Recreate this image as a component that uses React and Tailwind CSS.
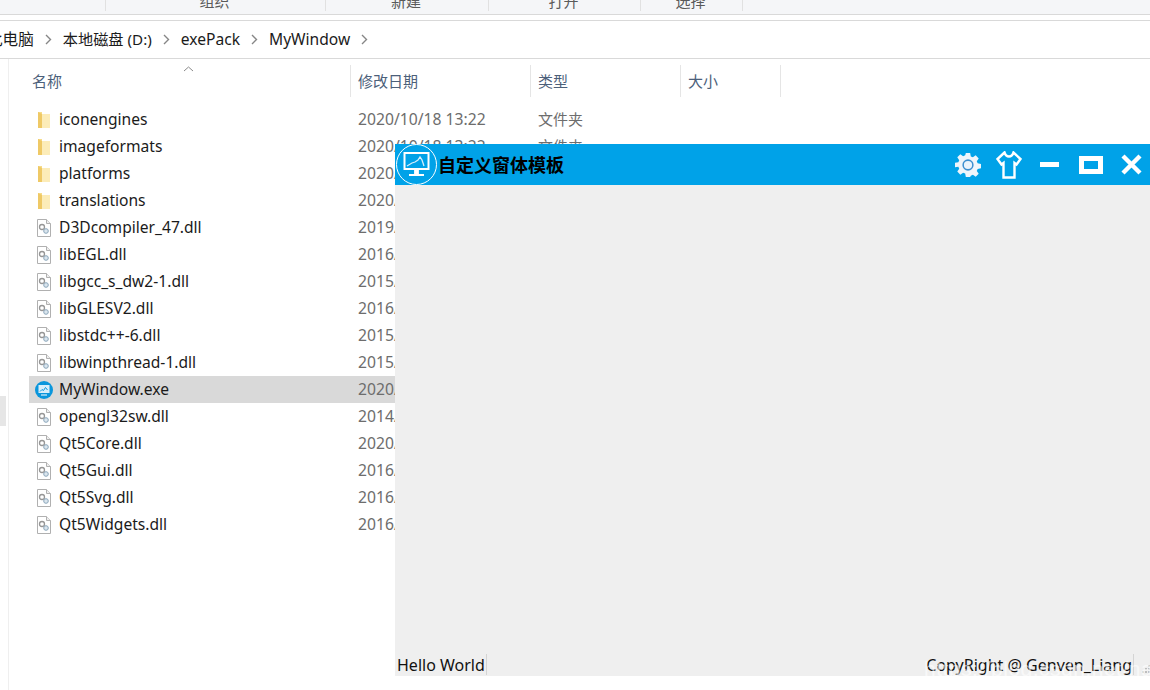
import React from "react";

const uiFont = { fontFamily: '"Noto Sans", "Noto Sans CJK SC", sans-serif' };

const files = [
  { name: "iconengines", date: "2020/10/18 13:22", type: "文件夹", kind: "folder" },
  { name: "imageformats", date: "2020/10/18 13:22", type: "文件夹", kind: "folder" },
  { name: "platforms", date: "2020/10/18 13:22", type: "文件夹", kind: "folder" },
  { name: "translations", date: "2020/10/18 13:22", type: "文件夹", kind: "folder" },
  { name: "D3Dcompiler_47.dll", date: "2019/1/1 12:00", kind: "dll" },
  { name: "libEGL.dll", date: "2016/1/1 12:00", kind: "dll" },
  { name: "libgcc_s_dw2-1.dll", date: "2015/1/1 12:00", kind: "dll" },
  { name: "libGLESV2.dll", date: "2016/1/1 12:00", kind: "dll" },
  { name: "libstdc++-6.dll", date: "2015/1/1 12:00", kind: "dll" },
  { name: "libwinpthread-1.dll", date: "2015/1/1 12:00", kind: "dll" },
  { name: "MyWindow.exe", date: "2020/10/18 13:22", kind: "exe", selected: true },
  { name: "opengl32sw.dll", date: "2014/1/1 12:00", kind: "dll" },
  { name: "Qt5Core.dll", date: "2020/1/1 12:00", kind: "dll" },
  { name: "Qt5Gui.dll", date: "2016/1/1 12:00", kind: "dll" },
  { name: "Qt5Svg.dll", date: "2016/1/1 12:00", kind: "dll" },
  { name: "Qt5Widgets.dll", date: "2016/1/1 12:00", kind: "dll" },
];

const FolderIcon = () => (
  <svg width="16" height="18" viewBox="0 0 16 18">
    <path d="M2 1h4v16H2z" fill="#f6dc8c" />
    <path d="M6 3h8v14H6z" fill="#fcecb8" />
    <path d="M2 1l4 2v14H2z" fill="#efc966" />
  </svg>
);

const DllIcon = () => (
  <svg width="16" height="18" viewBox="0 0 16 18">
    <path d="M1.500.5h9l4 4v13h-13z" fill="#fff" stroke="#b0b0b0" />
    <path d="M10.500.5v4h4" fill="#eee" stroke="#b0b0b0" />
    <circle cx="6" cy="8" r="2.500" fill="none" stroke="#969696" strokeWidth="1.300" />
    <circle cx="10" cy="12" r="2.300" fill="#dbe6ee" stroke="#8aa5ba" />
  </svg>
);

const ExeIcon = () => (
  <svg width="18" height="18" viewBox="0 0 18 18">
    <circle cx="9" cy="9" r="9" fill="#0a96dc" />
    <rect x="3.500" y="4" width="11" height="8" fill="#d8eefa" />
    <path d="M5 10.500l2-2 1.500 1 2-3 2 2.500" fill="none" stroke="#0a96dc" />
    <path d="M6 14h6" stroke="#d8eefa" strokeWidth="1.200" />
  </svg>
);

const icons = { folder: FolderIcon, dll: DllIcon, exe: ExeIcon };

const Chevron = () => (
  <svg width="7" height="11" viewBox="0 0 7 11" className="shrink-0">
    <path d="M1 1l4.500 4.500L1 10" fill="none" stroke="#868686" strokeWidth="1.400" />
  </svg>
);

const FileRow = ({ file }) => {
  const Icon = icons[file.kind];
  return (
    <div
      className={`flex h-[27px] w-[735px] items-center ${file.selected ? "bg-[#d9d9d9]" : ""}`}
    >
      <div className="flex w-[30px] shrink-0 justify-center">
        <Icon />
      </div>
      <span className="w-[299px] shrink-0 text-[15.6px] text-[#1b1b1b]">{file.name}</span>
      <span className="w-[180px] shrink-0 text-[15.7px] text-[#6d6d6d]">{file.date}</span>
      <span className="text-[15px] text-[#6d6d6d]">{file.type}</span>
    </div>
  );
};

const HeaderCell = ({ width, children }) => (
  <div className={`flex h-8 items-center border-r border-[#e5e5e5] pl-[7px] text-[15px] text-[#4c607a] ${width}`}>
    {children}
  </div>
);

const Toolbar = () => (
  <div className="relative h-[15px] overflow-hidden border-b border-[#d9d9d9] bg-[#f5f6f8]">
    <div className="flex h-[11px] items-end text-[15px] leading-none text-[#5a5a5a]">
      {[
        ["w-[106px]", ""],
        ["w-[220px]", "组织"],
        ["w-[163px]", "新建"],
        ["w-[152px]", "打开"],
        ["w-[102px]", "选择"],
      ].map(([width, label], i) => (
        <div key={i} className={`flex h-[11px] justify-center border-r border-[#e1e1e1] ${width}`}>
          <span className="mt-[-6px] mr-[2px]">{label}</span>
        </div>
      ))}
    </div>
  </div>
);

const AddressBar = () => (
  <div className="mt-[5px] flex h-[39px] items-center gap-[11px] overflow-hidden border-y border-[#d9d9d9] bg-white text-[15.6px] text-[#1b1b1b]">
    <span className="ml-[-13px] whitespace-nowrap">此电脑</span>
    <Chevron />
    <span className="whitespace-nowrap text-[15.2px]">本地磁盘 (D:)</span>
    <Chevron />
    <span>exePack</span>
    <Chevron />
    <span>MyWindow</span>
    <Chevron />
  </div>
);

const GearIcon = () => (
  <svg width="26" height="26" viewBox="0 0 24 24">
    <path
      fillRule="evenodd"
      d="M10 1h4l.6 3.100 1.900.8 2.600-1.800 2.800 2.800-1.800 2.600.8 1.900 3.100.6v4l-3.100.6-.8 1.900 1.800 2.600-2.800 2.800-2.600-1.800-1.900.8L14 23h-4l-.6-3.100-1.900-.8-2.600 1.800-2.800-2.800 1.800-2.600-.8-1.900L0 14v-4l3.100-.6.8-1.900-1.800-2.600 2.800-2.800 2.600 1.800 1.900-.8z"
      fill="#eef5fb"
    />
    <circle cx="12" cy="12" r="4.500" fill="#eaf3fb" stroke="#3d8fd0" strokeWidth="1.400" />
  </svg>
);

const ShirtIcon = () => (
  <svg width="26" height="28" viewBox="0 0 26 28">
    <path
      d="M8.500 1.500L1.500 8l4 5.500 2-1.500v14.500h11V12l2 1.500 4-5.500-7-6.500c-1 3-3 4-4.500 4s-3.500-1-4.500-4z"
      fill="none"
      stroke="#fff"
      strokeWidth="2.400"
    />
  </svg>
);

const MinIcon = () => <div className="h-[5px] w-[19px] bg-white" />;

const MaxIcon = () => <div className="h-[18px] w-6 border-[5px] border-white" />;

const CloseIcon = () => (
  <svg width="21" height="21" viewBox="0 0 21 21">
    <path d="M2 2l17 17M19 2L2 19" stroke="#fff" strokeWidth="4.400" />
  </svg>
);

const LogoIcon = () => (
  <div className="absolute left-[1px] top-0 flex h-[41px] w-[41px] items-center justify-center rounded-full border border-white bg-[#00a2e8]">
    <svg width="27" height="25" viewBox="0 0 27 25">
      <rect x="1.500" y="1" width="24" height="16" fill="none" stroke="#fff" strokeWidth="2" />
      <path d="M4 14l5-3 3-1 3-2 2-3 2 3 2 6" fill="none" stroke="#d6eefb" strokeWidth="1.300" />
      <path d="M12 18h3v4h-3zM6 23h15" stroke="#fff" strokeWidth="1.800" fill="#fff" />
    </svg>
  </div>
);

const QtWindow = () => (
  <div className="absolute left-[395px] top-[144px] flex h-[532px] w-[755px] flex-col bg-[#efefef]">
    <div className="relative flex h-[41px] shrink-0 items-center bg-[#00a2e8]">
      <LogoIcon />
      <span
        className="ml-[43px] text-[18px] font-bold text-black"
        style={{ fontFamily: '"Noto Sans CJK SC", sans-serif' }}
      >
        自定义窗体模板
      </span>
      <div className="ml-auto mr-[-2px] flex h-full items-center">
        <div className="flex w-[41px] justify-center"><GearIcon /></div>
        <div className="flex w-[41px] justify-center"><ShirtIcon /></div>
        <div className="flex w-[41px] justify-center"><MinIcon /></div>
        <div className="flex w-[41px] justify-center"><MaxIcon /></div>
        <div className="flex w-[41px] justify-center"><CloseIcon /></div>
      </div>
    </div>
    <div className="flex-1" />
    <div className="relative flex h-[23px] shrink-0 items-center justify-between pl-[2px] text-[16px] text-[#111]">
      <span className="flex h-[21px] w-[90px] items-center whitespace-nowrap border-r border-[#d4d4d4]">Hello World</span>
      <span className="mr-[16px] flex h-[21px] items-center whitespace-nowrap border-r border-[#d4d4d4] pr-[1px]">
        CopyRight @ Genven_Liang
      </span>
      <div className="absolute bottom-[3px] right-0 grid grid-cols-3 gap-[1px]">
        {[0, 1, 2, 3, 4, 5, 6, 7, 8].map((n) => (
          <div key={n} className={`h-[2px] w-[2px] ${[2, 4, 5, 6, 7, 8].includes(n) ? "bg-[#bdbdbd]" : ""}`} />
        ))}
      </div>
    </div>
  </div>
);

const App = () => (
  <div className="relative h-[690px] w-[1150px] overflow-hidden bg-white" style={uiFont}>
    <Toolbar />
    <AddressBar />
    <div className="flex h-[631px]">
      <div className="w-[9px] shrink-0 border-r border-[#efefef] pt-[337px]">
        <div className="h-[30px] w-[6px] bg-[#e6e6e6]" />
      </div>
      <div className="flex-1 pl-5">
        <div className="mt-[6px] flex">
          <div className="relative flex h-8 w-[322px] items-center border-r border-[#e5e5e5] pl-[3px] text-[15px] text-[#4c607a]">
            名称
            <svg width="11" height="6" viewBox="0 0 11 6" className="absolute left-[154px] top-[1px]">
              <path d="M1 5l4.500-4L10 5" fill="none" stroke="#8a8a8a" />
            </svg>
          </div>
          <HeaderCell width="w-[180px]">修改日期</HeaderCell>
          <HeaderCell width="w-[150px]">类型</HeaderCell>
          <HeaderCell width="w-[100px]">大小</HeaderCell>
        </div>
        <div className="mt-[9px]">
          {files.map((file) => (
            <FileRow key={file.name} file={file} />
          ))}
        </div>
      </div>
    </div>
    <QtWindow />
    <span className="absolute left-[924px] top-[653px] text-[21px] tracking-[0.5px] text-white/60" style={{ fontFamily: '"Liberation Sans", sans-serif' }}>
      https://blog.csdn.net/nanfeibuyi
    </span>
  </div>
);

export default App;
